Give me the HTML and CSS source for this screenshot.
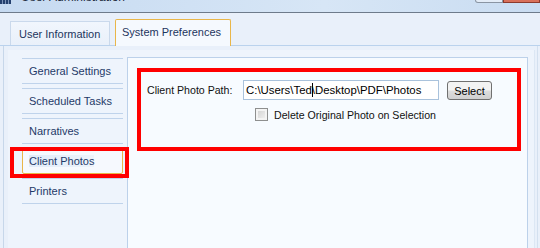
FILE: index.html
```html
<!DOCTYPE html>
<html lang="en">
<head>
    <meta charset="UTF-8">
    <meta name="viewport" content="width=device-width, initial-scale=1.0">
    <title>User Administration</title>
    <link rel="stylesheet" href="styles.css">
</head>
<body>
<div class="window">
    <div class="titlebar">
        <span class="app-icon"></span>
        <span class="title">User Administration</span>
        <div class="controls">
            <span class="ctl"></span>
            <span class="ctl close"></span>
        </div>
    </div>

    <div class="tabstrip">
        <div class="tab">User Information</div>
        <div class="tab active">System Preferences</div>
    </div>

    <div class="tabpage">
        <div class="page-body">
            <ul class="nav">
                <li class="nav-item">General Settings</li>
                <li class="nav-item">Scheduled Tasks</li>
                <li class="nav-item">Narratives</li>
                <li class="nav-item selected">
                    <span class="nav-text">Client Photos</span>
                    <span class="mark mark-nav"></span>
                </li>
                <li class="nav-item">Printers</li>
            </ul>

            <div class="panel">
                <div class="mark mark-panel">
                    <div class="form-row">
                        <label class="path-label" for="photo-path">Client Photo Path:</label>
                        <div class="path-input" id="photo-path">C:\Users\Ted<span class="caret"></span>\Desktop\PDF\Photos</div>
                        <button class="btn">Select</button>
                    </div>
                    <label class="check-row">
                        <span class="check-box"></span>
                        Delete Original Photo on Selection
                    </label>
                </div>
            </div>
        </div>
    </div>
</div>
</body>
</html>
```

FILE: styles.css
```css
:root {
    --window-bg: #e9f0fa;
    --page-bg: #eef4fc;
    --panel-bg: #f7fbff;
    --line: #bfd3eb;
    --nav-text: #1f3a68;
    --gold: #e9b649;
    --mark: #ff0000;
    --font-family: 'Liberation Sans', Arial, sans-serif;
}
* {
    box-sizing: border-box;
}
body {
    margin: 0;
    width: 540px;
    height: 248px;
    overflow: hidden;
    font-family: var(--font-family);
    font-size: 11px;
    background-color: var(--window-bg);
}
.window {
    height: 100%;
    display: flex;
    flex-direction: column;
}

/* title bar, mostly scrolled off the top */
.titlebar {
    height: 13px;
    flex: none;
    display: flex;
    align-items: flex-start;
    background: linear-gradient(90deg, #c6daf1, #d7e6f6 60%, #c9dcf1);
    border-bottom: 1px solid #6e7b8b;
    overflow: hidden;
}
.app-icon {
    width: 11px;
    height: 4px;
    background: repeating-linear-gradient(90deg, #24406e 0 2px, #7d94b8 2px 3px);
}
.title {
    margin: -9px 0 0 10px;
    font-size: 12px;
    line-height: 12px;
    color: #1b2a3c;
}
.controls {
    margin-left: auto;
    display: flex;
}
.ctl {
    width: 28px;
    height: 3px;
    border: 1px solid #8a95a3;
    border-top: none;
    border-radius: 0 0 0 3px;
    background-color: #e3ecf7;
}
.ctl.close {
    width: 37px;
    border-color: #8c3a2c;
    border-radius: 0;
    background-color: #d8705a;
}

/* tabs */
.tabstrip {
    height: 33px;
    flex: none;
    display: flex;
    align-items: flex-end;
    gap: 5px;
    padding-left: 10px;
    border-bottom: 1px solid #bad2ed;
}
.tab {
    width: 100px;
    height: 24px;
    padding: 1px 0 0 8px;
    display: flex;
    align-items: center;
    border: 1px solid #cad9ec;
    border-bottom: none;
    background: linear-gradient(#f1f6fd, #e9f0fa);
    color: #1d355d;
}
.tab.active {
    width: 116px;
    height: 27px;
    margin-bottom: -1px;
    padding: 0 0 2px 6px;
    border-color: var(--gold);
    border-radius: 2px 2px 0 0;
    background: #f5f9fe;
}

/* tab page */
.tabpage {
    flex: 1;
    margin: 0 2px 0 3px;
    padding: 4px 2px 0 4px;
    border-left: 1px solid #c7d7ea;
    border-right: 1px solid #d3e0ef;
    display: flex;
}
.page-body {
    flex: 1;
    display: flex;
    padding-right: 6px;
    background-color: var(--page-bg);
    border-right: 1px solid #dce7f4;
}

/* left navigation */
.nav {
    width: 119px;
    list-style: none;
    margin: 0;
    padding: 8px 0 0 14px;
}
.nav-item {
    position: relative;
    width: 101px;
    height: 26px;
    margin-bottom: 4px;
    padding-left: 7px;
    display: flex;
    align-items: center;
    border-top: 1px solid var(--line);
    border-bottom: 1px solid var(--line);
    color: var(--nav-text);
}
.nav-item.selected {
    padding-left: 6px;
    border: 1px solid var(--gold);
    border-radius: 2px;
    background-color: #f6f9fe;
}
.nav-text {
    background: linear-gradient(90deg, #e1ecf9, #edf3fb);
}

/* content */
.panel {
    flex: 1;
    margin-top: 7px;
    border: 1px solid #bcd1ea;
    border-bottom: none;
    background-color: var(--panel-bg);
}
.mark {
    border: 4px solid var(--mark);
}
.mark-nav {
    position: absolute;
    left: -13px;
    top: -2px;
    width: 119px;
    height: 31px;
}
.mark-panel {
    width: 384px;
    height: 83px;
    margin: 10px 0 0 9px;
    padding: 8px 0 0 6px;
    font-size: 10.6px;
}
.form-row {
    display: flex;
    align-items: flex-start;
}
.path-label {
    width: 96px;
    line-height: 20px;
    color: #111;
}
.path-input {
    width: 196px;
    height: 20px;
    padding: 0 0 0 2px;
    font-size: 11.4px;
    line-height: 18px;
    border: 1px solid #a9c2dc;
    background-color: #fff;
    color: #000;
    white-space: nowrap;
    overflow: hidden;
}
.caret {
    display: inline-block;
    width: 1px;
    height: 14px;
    margin-right: -1px;
    vertical-align: -3px;
    background-color: #000;
}
.btn {
    width: 45px;
    height: 19px;
    margin: 1px 0 0 8px;
    padding: 0;
    font-family: var(--font-family);
    font-size: 11px;
    color: #000;
    border: 1px solid #707070;
    border-radius: 3px;
    background: linear-gradient(#f3f3f3 45%, #dcdcdc 55%, #d0d0d0);
}
.check-row {
    display: flex;
    align-items: center;
    height: 13px;
    margin: 8px 0 0 108px;
    color: #111;
}
.check-box {
    width: 13px;
    height: 13px;
    margin-right: 6px;
    border: 1px solid #8e8f8f;
    background: linear-gradient(135deg, #cfcfcf, #f5f5f5);
    box-shadow: inset 0 0 0 2px #f4f4f4;
}
```
